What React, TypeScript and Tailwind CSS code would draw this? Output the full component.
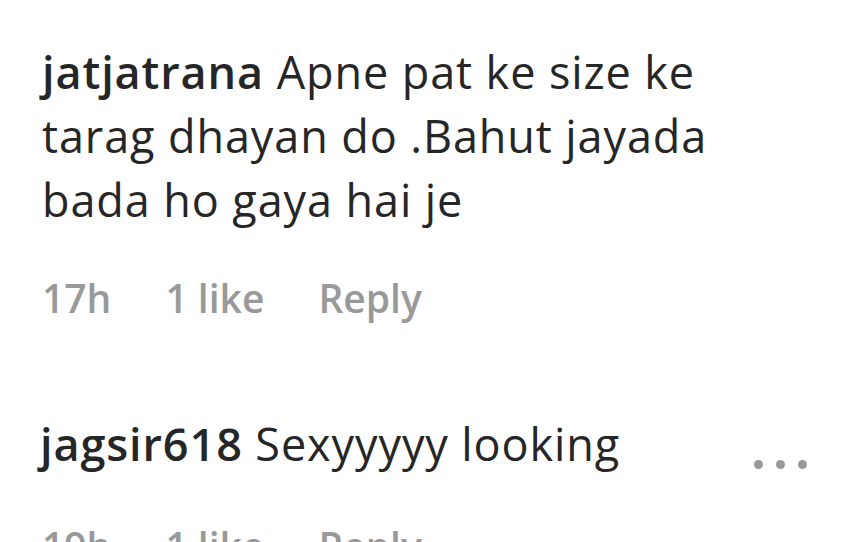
const font = { fontFamily: '"Open Sans", "Noto Sans", sans-serif' };

function Meta({ time }: { time: string }) {
  return (
    <div className="flex gap-[54px] text-[39px] font-semibold text-[#999999] leading-[48px]">
      <span>{time}</span>
      <span>1 like</span>
      <span>Reply</span>
    </div>
  );
}

function Dots() {
  return (
    <div className="flex gap-[13px] mt-[40px]">
      <span className="w-[9px] h-[9px] rounded-full bg-[#999999]" />
      <span className="w-[9px] h-[9px] rounded-full bg-[#999999]" />
      <span className="w-[9px] h-[9px] rounded-full bg-[#999999]" />
    </div>
  );
}

export default function App() {
  return (
    <div
      className="w-[850px] h-[542px] overflow-hidden bg-white pl-[42px] pt-[40px] text-[#262626]"
      style={font}
    >
      <div className="w-[740px] text-[45px] leading-[64px] tracking-[0.9px]">
        <span className="font-semibold">jatjatrana</span> Apne pat ke size ke
        tarag dhayan do .Bahut jayada bada ho gaya hai je
      </div>
      <div className="mt-[42px]">
        <Meta time="17h" />
      </div>
      <div className="mt-[90px] flex items-center justify-between pr-[43px]">
        <div className="text-[45px] leading-[64px] -ml-[2px] tracking-[0.9px]">
          <span className="font-semibold">jagsir618</span> Sexyyyyy looking
        </div>
        <Dots />
      </div>
      <div className="mt-[46px]">
        <Meta time="19h" />
      </div>
    </div>
  );
}
